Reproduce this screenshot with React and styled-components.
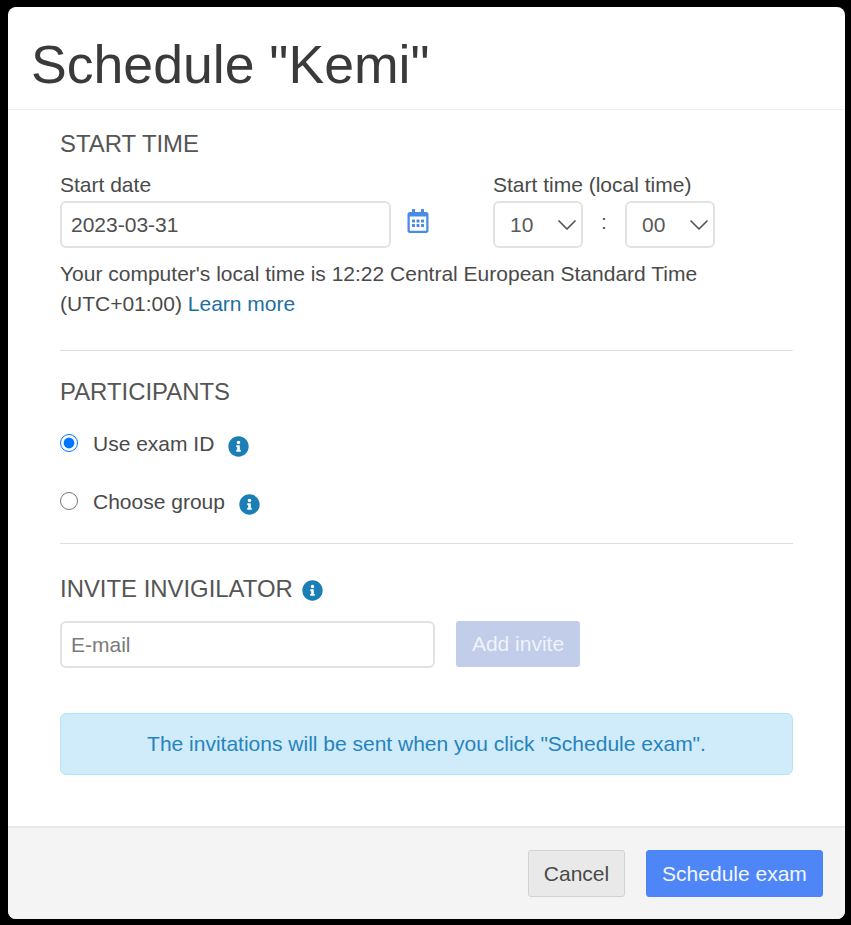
import * as React from "react";
import styled, { createGlobalStyle } from "styled-components";
import { FaInfoCircle, FaRegCalendarAlt } from "react-icons/fa";
import { ChevronDown } from "lucide-react";

const GlobalStyle = createGlobalStyle`
  html, body {
    margin: 0;
    padding: 0;
    background: #000;
  }
  body {
    font-family: "Liberation Sans", Arial, sans-serif;
    color: #444;
  }
  * {
    box-sizing: border-box;
  }
`;

const Page = styled.div`
  width: 851px;
  height: 925px;
  padding: 7px 6px 6px 8px;
  background: #000;
`;

const Modal = styled.div`
  display: flex;
  flex-direction: column;
  height: 912px;
  background: #fff;
  border-radius: 8px;
  overflow: hidden;
`;

const Header = styled.header`
  height: 103px;
  padding: 23px 0 0 23px;
  border-bottom: 1px solid #eee;
`;

const Title = styled.h1`
  margin: 0;
  font-size: 53.6px;
  line-height: 68px;
  font-weight: 400;
  color: #3a3a3a;
`;

const Body = styled.main`
  flex: 1;
  padding: 0 52px;
`;

const Section = styled.section`
  padding-top: ${(p) => p.$top}px;
  padding-bottom: ${(p) => p.$bottom}px;
  border-bottom: ${(p) => (p.$divider ? "1px solid #ddd" : "none")};
`;

const Heading = styled.h2`
  display: flex;
  align-items: center;
  gap: 9px;
  margin: 0;
  height: 30px;
  font-size: 23.9px;
  line-height: 30px;
  font-weight: 400;
  color: #555;
`;

const DateRow = styled.div`
  display: flex;
  margin-top: 12px;
`;

const Field = styled.div`
  display: flex;
  flex-direction: column;
  width: ${(p) => p.$width}px;
`;

const Label = styled.label`
  height: 30px;
  font-size: 21px;
  line-height: 28px;
  color: #4a4a4a;
`;

const TextInput = styled.input`
  width: ${(p) => p.$width}px;
  height: 47px;
  padding: 0 9px;
  border: 2px solid #e2e2e2;
  border-radius: 6px;
  background: #fff;
  font-family: inherit;
  font-size: 21px;
  color: #4f4f4f;
  outline: none;
  &::placeholder {
    color: #7a7a7a;
    opacity: 1;
  }
`;

const DateControl = styled.div`
  display: flex;
  align-items: center;
  gap: 15px;
  color: #4a8be8;
  font-size: 24px;
  svg {
    display: block;
    margin-top: -8px;
  }
`;

const TimeControls = styled.div`
  display: flex;
  align-items: center;
`;

const SelectWrap = styled.div`
  position: relative;
  width: 90px;
  height: 47px;
  svg {
    position: absolute;
    top: 8px;
    right: 0;
    color: #555;
    pointer-events: none;
  }
`;

const Select = styled.select`
  appearance: none;
  width: 100%;
  height: 100%;
  padding: 0 0 0 15px;
  border: 2px solid #e2e2e2;
  border-radius: 6px;
  background: #fff;
  font-family: inherit;
  font-size: 21px;
  color: #5a5a5a;
  outline: none;
`;

const Colon = styled.span`
  width: 42px;
  margin-top: -6px;
  text-align: center;
  font-size: 21px;
  color: #555;
`;

const Note = styled.p`
  margin: 11px 0 0;
  font-size: 21px;
  line-height: 30px;
  color: #4a4a4a;
`;

const LearnMore = styled.a`
  color: #1f6f9f;
  text-decoration: none;
`;

const RadioList = styled.div`
  display: flex;
  flex-direction: column;
  gap: 30px;
  margin-top: 23px;
`;

const RadioRow = styled.div`
  display: flex;
  align-items: center;
  height: 28px;
  font-size: 21px;
  color: #4a4a4a;
`;

const Radio = styled.input`
  width: 18px;
  height: 18px;
  margin: 0 15px 3px 0;
  accent-color: #0075ff;
`;

const InfoIcon = styled(FaInfoCircle)`
  flex: none;
  font-size: 21px;
  color: #1b7eb5;
  margin-left: ${(p) => p.$left || 0}px;
  margin-top: ${(p) => p.$down || 0}px;
`;

const InviteRow = styled.div`
  display: flex;
  gap: 21px;
  margin-top: 17px;
`;

const AddButton = styled.button`
  width: 124px;
  height: 46px;
  border: none;
  border-radius: 3px;
  background: #c1cde9;
  color: #f0f3fa;
  font-family: inherit;
  font-size: 21px;
`;

const Alert = styled.div`
  display: flex;
  align-items: center;
  justify-content: center;
  height: 62px;
  margin-top: 45px;
  border: 1px solid #b8e2f8;
  border-radius: 6px;
  background: #d0ebf9;
  color: #2584bd;
  font-size: 21px;
`;

const Footer = styled.footer`
  display: flex;
  justify-content: flex-end;
  gap: 21px;
  height: 93px;
  padding: 22px 22px 0 0;
  border-top: 2px solid #e8e8e8;
  background: #f4f4f4;
`;

const Button = styled.button`
  width: ${(p) => p.$width}px;
  height: 47px;
  border-radius: 3px;
  border: 1px solid ${(p) => (p.$primary ? "#4a83f3" : "#d2d2d2")};
  background: ${(p) => (p.$primary ? "#4f86f7" : "#e9e9e9")};
  color: ${(p) => (p.$primary ? "#f2f6ff" : "#4a4a4a")};
  font-family: inherit;
  font-size: 21px;
`;

const TimeSelect = ({ value }) => (
  <SelectWrap>
    <Select defaultValue={value}>
      <option>{value}</option>
    </Select>
    <ChevronDown size={32} strokeWidth={1.3} />
  </SelectWrap>
);

export default function App() {
  return (
    <>
      <GlobalStyle />
      <Page>
        <Modal>
          <Header>
            <Title>Schedule "Kemi"</Title>
          </Header>
          <Body>
            <Section $top={19} $bottom={31} $divider>
              <Heading>START TIME</Heading>
              <DateRow>
                <Field $width={433}>
                  <Label>Start date</Label>
                  <DateControl>
                    <TextInput $width={331} defaultValue="2023-03-31" />
                    <FaRegCalendarAlt />
                  </DateControl>
                </Field>
                <Field $width={300}>
                  <Label>Start time (local time)</Label>
                  <TimeControls>
                    <TimeSelect value="10" />
                    <Colon>:</Colon>
                    <TimeSelect value="00" />
                  </TimeControls>
                </Field>
              </DateRow>
              <Note>
                Your computer's local time is 12:22 Central European Standard Time
                <br />
                (UTC+01:00) <LearnMore href="#">Learn more</LearnMore>
              </Note>
            </Section>

            <Section $top={26} $bottom={27} $divider>
              <Heading>PARTICIPANTS</Heading>
              <RadioList>
                <RadioRow>
                  <Radio type="radio" name="who" defaultChecked />
                  Use exam ID
                  <InfoIcon $left={14} $down={4} />
                </RadioRow>
                <RadioRow>
                  <Radio type="radio" name="who" />
                  Choose group
                  <InfoIcon $left={14} $down={4} />
                </RadioRow>
              </RadioList>
            </Section>

            <Section $top={30}>
              <Heading>
                INVITE INVIGILATOR
                <InfoIcon $down={2} />
              </Heading>
              <InviteRow>
                <TextInput $width={375} placeholder="E-mail" />
                <AddButton disabled>Add invite</AddButton>
              </InviteRow>
              <Alert>The invitations will be sent when you click "Schedule exam".</Alert>
            </Section>
          </Body>
          <Footer>
            <Button $width={97}>Cancel</Button>
            <Button $width={177} $primary>
              Schedule exam
            </Button>
          </Footer>
        </Modal>
      </Page>
    </>
  );
}
